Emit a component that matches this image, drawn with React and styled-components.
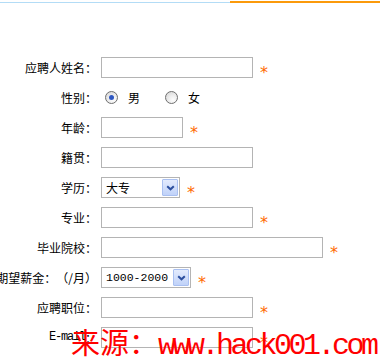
import React from 'react';
import styled, { createGlobalStyle } from 'styled-components';

const GlobalStyle = createGlobalStyle`
  html, body { margin:0; padding:0; background:#fff; }
  body {
    font-family:"Noto Sans CJK SC", "Noto Sans", sans-serif;
    font-size:12px;
    color:#000;
    text-spacing-trim:space-all;
  }
`;

const fields = [
  { label: '应聘人姓名：', kind: 'input', width: 152, required: true },
  { label: '性别：', kind: 'radio' },
  { label: '年龄：', kind: 'input', width: 82, required: true },
  { label: '籍贯：', kind: 'input', width: 152 },
  { label: '学历：', kind: 'select', width: 79, value: '大专', required: true },
  { label: '专业：', kind: 'input', width: 152, required: true },
  { label: '毕业院校：', kind: 'input', width: 222, required: true },
  { label: '期望薪金：（/月）', kind: 'select', width: 90, value: '1000-2000', latin: true, required: true },
  { label: '应聘职位：', kind: 'input', width: 152, required: true },
  { label: 'E-mail：', kind: 'input', width: 152, required: true, email: true },
];

const App = () => {
  return (
    <Page>
      <GlobalStyle />
      <TabLine>
        <TabRest />
        <TabActive />
      </TabLine>
      <Form>
        {fields.map((f) => (
          <Row key={f.label}>
            <Label>
              {f.email ? (
                <>
                  <LatinLabel>E-mail</LatinLabel>：
                </>
              ) : (
                f.label
              )}
            </Label>
            {f.kind === 'input' && <TextBox style={{ width: f.width }} />}
            {f.kind === 'select' && (
              <Select style={{ width: f.width }}>
                <SelectText latin={f.latin}>{f.value}</SelectText>
                <DropButton>
                  <svg width="9" height="6" viewBox="0 0 9 6">
                    <polyline points="1.2,1.2 4.5,4.3 7.8,1.2" fill="none" stroke="#2c4f9f" strokeWidth="2" />
                  </svg>
                </DropButton>
              </Select>
            )}
            {f.kind === 'radio' && (
              <RadioGroup>
                <Radio checked />
                <RadioText>男</RadioText>
                <Radio second />
                <RadioText>女</RadioText>
              </RadioGroup>
            )}
            {f.required && <Star>*</Star>}
          </Row>
        ))}
      </Form>
      <Watermark>
        来源：<WatermarkLatin>www.hack001.com</WatermarkLatin>
      </Watermark>
    </Page>
  );
};

const Page = styled.div`
position:relative;
width:380px;
height:357px;
overflow:hidden;
`;

const TabLine = styled.div`
display:flex;
align-items:flex-end;
height:3px;
`;

const TabRest = styled.div`
flex:1;
height:1px;
background:#b3dcf6;
`;

const TabActive = styled.div`
width:150px;
height:2px;
background:#fb9a0b;
`;

const Form = styled.div`
margin-top:50px;
display:flex;
flex-direction:column;
`;

const Row = styled.div`
display:flex;
align-items:center;
padding:4px 0 5px;
`;

const Label = styled.div`
width:97px;
flex-shrink:0;
margin-right:4px;
display:flex;
justify-content:flex-end;
white-space:nowrap;
line-height:21px;
text-spacing-trim:space-all;
`;

const LatinLabel = styled.span`
font-family:"Liberation Mono", monospace;
letter-spacing:-1.2px;
`;

const TextBox = styled.input`
height:21px;
box-sizing:border-box;
margin:0;
padding:0 3px;
border:1px solid #b4b4b4;
background:#fff;
outline:none;
`;

const Select = styled.div`
height:21px;
box-sizing:border-box;
border:1px solid #b4b4b4;
padding:1px 1px 1px 4px;
display:flex;
align-items:center;
`;

const SelectText = styled.span`
flex:1;
white-space:nowrap;
font-family:${(p) => (p.latin ? '"Liberation Mono", monospace' : '"Noto Sans CJK SC", sans-serif')};
font-size:${(p) => (p.latin ? '11.5px' : '12px')};
`;

const DropButton = styled.span`
width:16px;
height:17px;
box-sizing:border-box;
border:1px solid #a9c0f1;
border-radius:1px;
background:linear-gradient(#e3ebfd, #c0d2f9);
display:flex;
align-items:center;
justify-content:center;
`;

const RadioGroup = styled.div`
display:flex;
align-items:center;
height:21px;
`;

const Radio = styled.span`
width:13px;
height:13px;
box-sizing:border-box;
border-radius:50%;
border:1px solid #6f6f6f;
margin-left:${(p) => (p.second ? '25px' : '4px')};
background:radial-gradient(circle at 65% 70%, #fdfdfd 0%, #ececec 45%, #d2d2d2 100%);
display:flex;
align-items:center;
justify-content:center;

&::after {
  content:'';
  width:5px;
  height:5px;
  border-radius:50%;
  background:#2f58c2;
  display:${(p) => (p.checked ? 'block' : 'none')};
}
`;

const RadioText = styled.span`
margin-left:10px;
line-height:21px;
`;

const Star = styled.span`
margin-left:7px;
color:#ff6a00;
font-family:"DejaVu Sans", sans-serif;
font-size:16px;
line-height:21px;
height:21px;
padding-top:5px;
box-sizing:border-box;
`;

const Watermark = styled.div`
position:absolute;
left:71px;
top:327px;
color:#ff0000;
font-size:29px;
line-height:1;
white-space:nowrap;
pointer-events:none;
`;

const WatermarkLatin = styled.span`
font-family:"Liberation Mono", monospace;
font-size:30px;
letter-spacing:-3.5px;
`;

export default App;
